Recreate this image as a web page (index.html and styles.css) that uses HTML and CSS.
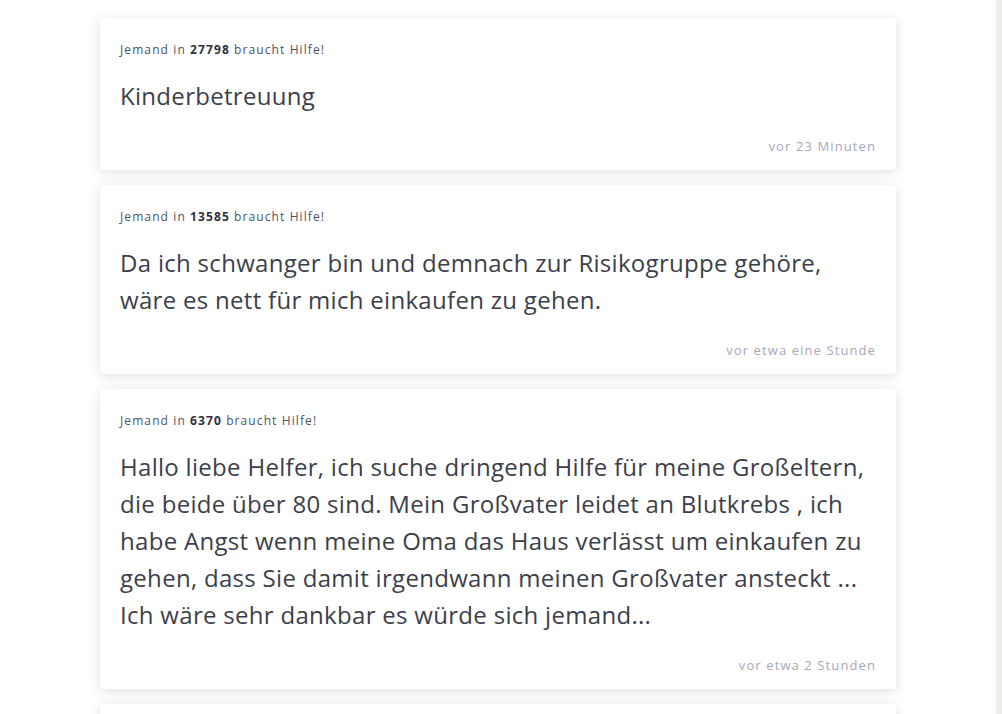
FILE: index.html
```html
<!DOCTYPE html>
<html lang="de">
<head>
  <meta charset="UTF-8">
  <title>Hilfe gesucht</title>
  <link rel="stylesheet" href="styles.css">
</head>
<body>
  <div class="main">
    <div class="feed">
      <div class="card">
        <div class="who">Jemand in <b>27798</b> braucht Hilfe!</div>
        <p class="text">Kinderbetreuung</p>
        <div class="time">vor 23 Minuten</div>
      </div>
      <div class="card">
        <div class="who">Jemand in <b>13585</b> braucht Hilfe!</div>
        <p class="text">Da ich schwanger bin und demnach zur Risikogruppe gehöre, wäre es nett für mich einkaufen zu gehen.</p>
        <div class="time">vor etwa eine Stunde</div>
      </div>
      <div class="card">
        <div class="who">Jemand in <b>6370</b> braucht Hilfe!</div>
        <p class="text">Hallo liebe Helfer, ich suche dringend Hilfe für meine Großeltern, die beide über 80 sind. Mein Großvater leidet an Blutkrebs , ich habe Angst wenn meine Oma das Haus verlässt um einkaufen zu gehen, dass Sie damit irgendwann meinen Großvater ansteckt ... Ich wäre sehr dankbar es würde sich jemand...</p>
        <div class="time">vor etwa 2 Stunden</div>
      </div>
      <div class="card">
        <div class="who">Jemand in <b>10115</b> braucht Hilfe!</div>
        <p class="text">Einkaufen</p>
        <div class="time">vor etwa 3 Stunden</div>
      </div>
    </div>
  </div>
  <div class="edge"></div>
</body>
</html>
```

FILE: styles.css
```css
html, body {
  height: 100%;
}
body {
  margin: 0;
  font-family: "Open Sans", Arial, sans-serif;
  display: flex;
  background: #fff;
  overflow: hidden;
}
.main {
  flex-grow: 1;
  display: flex;
  justify-content: center;
}
.edge {
  width: 6px;
  background: #efede7;
}
.feed {
  width: 796px;
  padding-top: 18px;
  display: flex;
  flex-direction: column;
  gap: 15px;
}
.card {
  background: #fff;
  border-radius: 4px;
  box-shadow: 0 2px 12px rgba(0, 0, 0, 0.13);
  padding: 24px 20px 16px 20px;
}
.who {
  font-size: 12px;
  line-height: 16px;
  color: #4f5366;
  letter-spacing: 1.1px;
}
.who b {
  color: #2f3140;
}
.text {
  margin: 19px 0 0 0;
  font-size: 24px;
  line-height: 37px;
  color: #3c3f4a;
  letter-spacing: 0.3px;
}
.time {
  margin-top: 24px;
  font-size: 13px;
  line-height: 16px;
  text-align: right;
  color: #a7a9bb;
  letter-spacing: 1.1px;
}
```
